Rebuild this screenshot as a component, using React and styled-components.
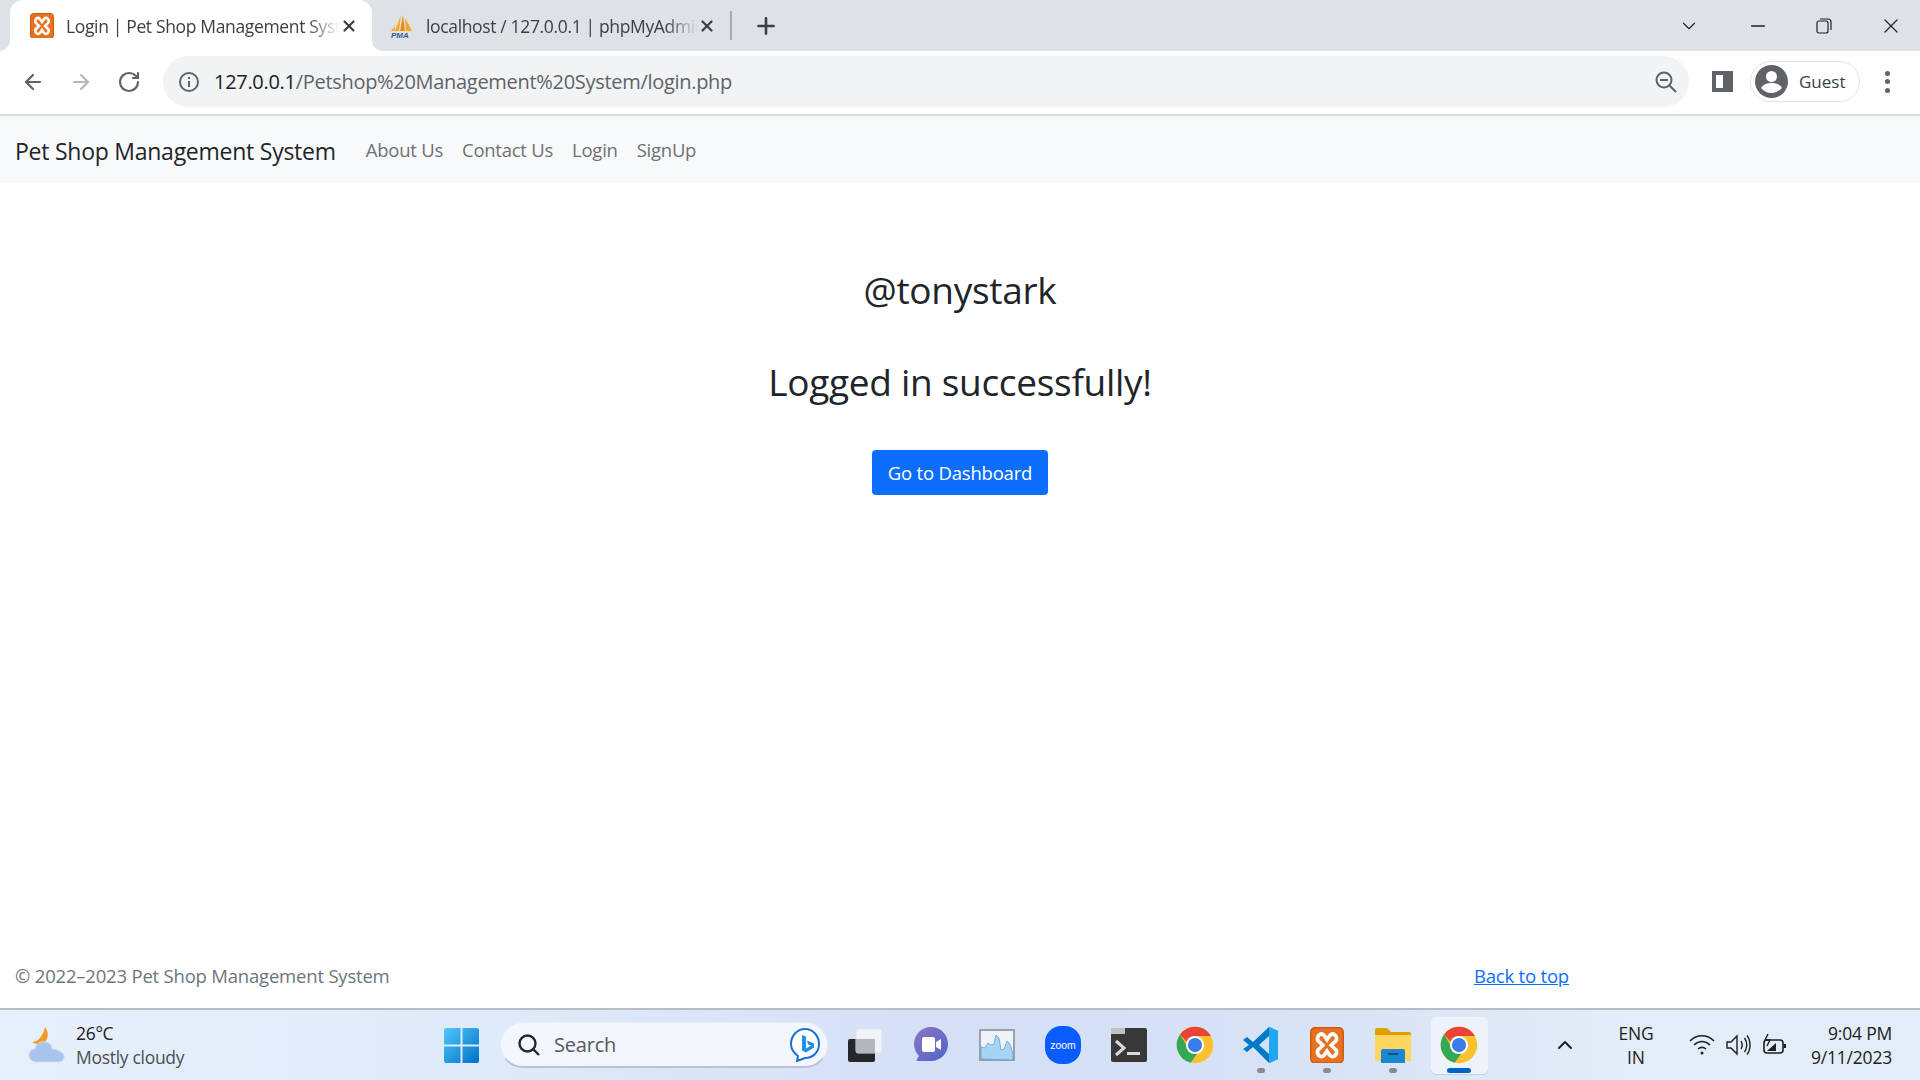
import React from 'react';
import styled, { createGlobalStyle } from 'styled-components';
import { ArrowLeft, ArrowRight, RotateCw, X, Plus, ChevronDown, Minus, ChevronUp } from 'lucide-react';

const GlobalStyle = createGlobalStyle`
  html, body { margin: 0; padding: 0; height: 100%; background: #fff; }
  body { font-family: "Open Sans", "Liberation Sans", sans-serif; color: #212529; }
  #root { height: 100%; }
  * { box-sizing: border-box; }
`;

const Page = styled.div`
  display: flex;
  flex-direction: column;
  width: 1920px;
  height: 1080px;
  overflow: hidden;
`;

/* browser chrome */
const TabStrip = styled.div`
  display: flex;
  align-items: stretch;
  height: 51px;
  padding-left: 10px;
  background: #dee1e6;
`;

const ActiveTab = styled.div`
  position: relative;
  display: flex;
  align-items: center;
  width: 362px;
  padding: 0 14px 0 20px;
  background: #fff;
  border-radius: 13px 13px 0 0;
  &::before, &::after {
    content: "";
    position: absolute;
    bottom: 0;
    width: 10px;
    height: 10px;
    background: radial-gradient(circle at var(--c) 0, #dee1e6 9.5px, #fff 10px);
  }
  &::before { left: -10px; --c: 0; }
  &::after { right: -10px; --c: 100%; }
`;

const Tab = styled.div`
  display: flex;
  align-items: center;
  width: 358px;
  padding: 0 14px 0 18px;
`;

const TabTitle = styled.span`
  flex: 1;
  margin-left: ${p => p.$gap}px;
  overflow: hidden;
  white-space: nowrap;
  font-size: 17.5px;
  letter-spacing: -0.35px;
  color: #3c4043;
  -webkit-mask-image: linear-gradient(to right, #000 88%, transparent 100%);
  mask-image: linear-gradient(to right, #000 88%, transparent 100%);
`;

const TabSeparator = styled.div`
  align-self: center;
  width: 2px;
  height: 29px;
  background: #a6a9ae;
`;

const NewTab = styled.div`
  display: flex;
  align-items: center;
  margin-left: 21px;
  color: #3c4043;
`;

const WindowControls = styled.div`
  display: flex;
  align-items: center;
  margin-left: auto;
  padding-right: 17px;
  color: #202124;
  gap: 47px;
`;

const Toolbar = styled.div`
  display: flex;
  align-items: center;
  height: 65px;
  padding: 0 0 2px 21px;
  background: #fff;
  border-bottom: 2px solid #dadce0;
`;

const NavIcons = styled.div`
  display: flex;
  align-items: center;
  gap: 24px;
  width: 142px;
  color: #5f6368;
`;

const Omnibox = styled.div`
  display: flex;
  align-items: center;
  width: 1526px;
  height: 51px;
  padding: 0 12px 0 16px;
  background: #f1f3f4;
  border-radius: 26px;
`;

const Url = styled.span`
  margin-left: 15px;
  font-size: 20px;
  letter-spacing: -0.3px;
  color: #5f6368;
  b { font-weight: 400; color: #202124; }
`;

const ZoomIcon = styled.span`
  display: flex;
  margin-left: auto;
`;

const SidePanel = styled.div`
  width: 21px;
  height: 21px;
  margin-left: 23px;
  border: 4px solid #5f6368;
  border-right-width: 10px;
`;

const GuestPill = styled.div`
  display: flex;
  align-items: center;
  gap: 11px;
  width: 110px;
  height: 41px;
  margin-left: 17px;
  padding-left: 4px;
  border: 1.5px solid #e3e4e6;
  border-radius: 21px;
  font-size: 17px;
  color: #3c4043;
`;

const MenuDots = styled.div`
  display: flex;
  flex-direction: column;
  gap: 3.5px;
  margin-left: 25px;
  i { width: 5px; height: 5px; border-radius: 50%; background: #5f6368; }
`;

/* page */
const Navbar = styled.nav`
  display: flex;
  align-items: center;
  height: 67px;
  padding: 0 15px;
  background: #f8f9fa;
`;

const Brand = styled.a`
  font-size: 23px;
  letter-spacing: -0.25px;
  color: #212529;
  margin-right: 30px;
  padding-top: 2px;
`;

const NavLink = styled.a`
  font-size: 18.5px;
  letter-spacing: -0.25px;
  margin-right: 19px;
  color: #6e7175;
`;

const Main = styled.main`
  flex: 1;
  display: flex;
  flex-direction: column;
  align-items: center;
  padding-top: 83px;
`;

const Heading = styled.h2`
  margin: 0 0 44px;
  font-size: 37px;
  line-height: 48px;
  font-weight: 500;
  letter-spacing: -0.3px;
  color: #212529;
`;

const PrimaryButton = styled.button`
  width: 176px;
  height: 45px;
  margin-top: 0;
  padding: 0;
  border: 0;
  border-radius: 4px;
  background: #0d6efd;
  color: #fff;
  font: 400 18.5px "Open Sans", sans-serif;
  letter-spacing: -0.2px;
`;

const Footer = styled.footer`
  display: flex;
  justify-content: space-between;
  align-items: center;
  height: 32px;
  margin-bottom: 17px;
  padding: 0 351px 0 15px;
  font-size: 18.5px;
  letter-spacing: -0.2px;
  color: #6c757d;
  a { color: #0d6efd; text-decoration: underline; }
`;

/* taskbar */
const Taskbar = styled.div`
  display: flex;
  align-items: center;
  height: 72px;
  padding-left: 28px;
  border-top: 2px solid #b9bcc2;
  background: linear-gradient(90deg, #e6f0fa 0%, #dfeafa 25%, #d5dff5 50%, #d8e3f6 70%, #e3edf8 85%, #e3edf8 100%);
`;

const Weather = styled.div`
  display: flex;
  align-items: center;
  gap: 11px;
  width: 416px;
`;

const WeatherText = styled.div`
  font-size: 17.5px;
  line-height: 24px;
  letter-spacing: -0.3px;
  color: #1f2023;
  span { display: block; color: #4b4e55; }
`;

const StartSlot = styled.div`
  display: flex;
  width: 35px;
`;

const SearchBox = styled.div`
  display: flex;
  align-items: center;
  width: 328px;
  height: 46px;
  margin-left: 21px;
  padding: 0 7px 0 16px;
  background: #f3f6fd;
  border-radius: 23px;
  border: 1px solid #e6ebf6;
  border-bottom: 2px solid #b9c0d2;
  font-size: 20px;
  color: #55585f;
  span { margin-left: 13px; flex: 1; letter-spacing: -0.2px; }
`;

const AppRow = styled.div`
  display: flex;
  margin-left: 4px;
`;

const AppSlot = styled.div`
  position: relative;
  display: flex;
  align-items: center;
  justify-content: center;
  width: 66px;
  height: 57px;
  &::before {
    content: "";
    display: ${p => (p.$active ? 'block' : 'none')};
    position: absolute;
    inset: 0 4.5px;
    border-radius: 5px;
    background: #eef2fb;
    box-shadow: 0 1px 0 #c6cddd;
  }
  svg { position: relative; }
`;

const RunDot = styled.i`
  position: absolute;
  bottom: 1px;
  left: 50%;
  height: 5px;
  border-radius: 3px;
  width: ${p => (p.$active ? 24 : 8)}px;
  margin-left: ${p => (p.$active ? -12 : -4)}px;
  background: ${p => (p.$active ? '#0067c0' : '#858a94')};
`;

const Tray = styled.div`
  display: flex;
  align-items: center;
  margin-left: auto;
  padding-right: 28px;
  color: #1f2023;
`;

const LangBlock = styled.div`
  margin-left: 34px;
  width: 50px;
  text-align: center;
  font-size: 17.5px;
  line-height: 24px;
  letter-spacing: -0.2px;
`;

const TrayIcons = styled.div`
  display: flex;
  align-items: center;
  gap: 11px;
  margin-left: 28px;
`;

const Clock = styled.div`
  margin-left: 24px;
  text-align: right;
  font-size: 17.5px;
  line-height: 24px;
  letter-spacing: -0.2px;
`;

const XamppIcon = ({ size = 24 }) => (
  <svg width={size} height={size * 1.08} viewBox="0 0 24 26">
    <rect x="0.5" y="0.5" width="23" height="25" rx="3" fill="#e8711f" stroke="#c9590f" />
    <path d="M6 6 q2-2 4 0 l2 3 2-3 q2-2 4 0 q2 3-1 5 l-2 2 2 2 q3 2 1 5 q-2 2-4 0 l-2-3-2 3 q-2 2-4 0 q-2-3 1-5 l2-2-2-2 q-3-2-1-5z" fill="none" stroke="#fff" strokeWidth="2.6" />
  </svg>
);

const PmaIcon = () => (
  <svg width="24" height="24" viewBox="0 0 24 24">
    <path d="M11 1 L5 17 H9z" fill="#f6a81c" />
    <path d="M13 1 L10 17 H15z" fill="#ee8a12" />
    <path d="M15 4 L16 17 H22z" fill="#f6a81c" />
    <path d="M5 12 L1 17 H5z" fill="#f0b040" />
    <text x="1" y="24" fontSize="8" fontWeight="700" fontStyle="italic" fill="#3b5a8c" fontFamily="Liberation Sans">PMA</text>
  </svg>
);

const ChromeIcon = () => (
  <svg width="38" height="38" viewBox="0 0 48 48">
    <circle cx="24" cy="24" r="23" fill="#fbc02d" />
    <path d="M24 1a23 23 0 0 1 20 11.5H24a11.5 11.5 0 0 0-10.8 7.5L5.2 10.5A23 23 0 0 1 24 1z" fill="#ea4335" />
    <path d="M5.2 10.5 14 26a11.5 11.5 0 0 0 12.5 9.2L18.6 46.4A23 23 0 0 1 5.2 10.5z" fill="#34a853" />
    <circle cx="24" cy="24" r="11.5" fill="#fff" />
    <circle cx="24" cy="24" r="9" fill="#3b7de8" />
  </svg>
);

const TaskViewIcon = () => (
  <svg width="36" height="36" viewBox="0 0 36 36">
    <rect x="1" y="12" width="27" height="23" rx="2" fill="#26272a" />
    <rect x="9" y="2" width="26" height="24" rx="2" fill="#f4f5f8" fillOpacity="0.9" stroke="#dfe2ea" />
    <rect x="9" y="12" width="19" height="14" fill="#b5b7bb" />
  </svg>
);

const MeetIcon = () => (
  <svg width="36" height="38" viewBox="0 0 36 38">
    <defs>
      <linearGradient id="meet" x1="0" y1="0" x2="1" y2="1">
        <stop offset="0" stopColor="#8a75c4" />
        <stop offset="1" stopColor="#5163c8" />
      </linearGradient>
    </defs>
    <path d="M18 1c10 0 17 8 17 17s-7 17-17 17H5c-1.500 0-2-1-1-2l2-3C3 27 1 23 1 18 1 9 8 1 18 1z" fill="url(#meet)" />
    <rect x="9" y="11" width="13" height="15" rx="2" fill="#fff" />
    <path d="M23 16l5-3v11l-5-3z" fill="#fff" />
  </svg>
);

const MonitorIcon = () => (
  <svg width="36" height="36" viewBox="0 0 36 36">
    <rect x="1" y="3" width="34" height="30" fill="#eef3f9" stroke="#9aa1ab" strokeWidth="2" />
    <path d="M2 32V20l4 1 3-5 3 2 3-1 2-9 3 3 2 12 3-1 3-8 3 3 3 10v6z" fill="#a6d4f2" stroke="#5ba6d6" strokeWidth="0.8" />
  </svg>
);

const ZoomAppIcon = () => (
  <svg width="36" height="38" viewBox="0 0 36 38">
    <rect x="0" y="0" width="36" height="38" rx="16" fill="#0b5cff" />
    <text x="18" y="23" fontSize="10.500" fill="#fff" textAnchor="middle" fontFamily="Liberation Sans">zoom</text>
  </svg>
);

const TerminalIcon = () => (
  <svg width="36" height="34" viewBox="0 0 36 34">
    <rect x="0" y="0" width="36" height="34" rx="2" fill="#383838" />
    <rect x="0" y="0" width="14" height="6" fill="#c0c0c0" />
    <path d="M5 13l8 7-8 7" fill="none" stroke="#d9d9d9" strokeWidth="3" />
    <rect x="16" y="24" width="13" height="3" fill="#d9d9d9" />
  </svg>
);

const VsCodeIcon = () => (
  <svg width="36" height="38" viewBox="0 0 36 38">
    <path d="M26 1l9 4v28l-9 4L10 21l-6 5-4-3 6-4-6-5 4-3 6 5z" fill="#0078c8" />
    <path d="M26 1l9 4v28l-9 4z" fill="#1fa8f1" />
    <path d="M26 10v18l-10-9z" fill="#d5dff5" />
  </svg>
);

const FolderIcon = () => (
  <svg width="36" height="36" viewBox="0 0 36 36">
    <path d="M0 3a2 2 0 0 1 2-2h10l4 4h18a2 2 0 0 1 2 2v4H0z" fill="#e0a100" />
    <path d="M0 8h36v26H0z" fill="#ffd662" />
    <path d="M6 36V24a2 2 0 0 1 2-2h20a2 2 0 0 1 2 2v12z" fill="#1b87d2" />
    <rect x="13" y="26" width="10" height="2" fill="#0c4f8f" />
  </svg>
);

const WinLogo = () => (
  <svg width="35" height="35" viewBox="0 0 35 35">
    <defs>
      <linearGradient id="win" x1="0" y1="0" x2="1" y2="1">
        <stop offset="0" stopColor="#4fc8fa" />
        <stop offset="1" stopColor="#0070c8" />
      </linearGradient>
    </defs>
    <path d="M0 2a2 2 0 0 1 2-2h14.500v16.500H0zM18.500 0H33a2 2 0 0 1 2 2v14.500H18.500zM0 18.500h16.500V35H2a2 2 0 0 1-2-2zM18.500 18.500H35V33a2 2 0 0 1-2 2H18.500z" fill="url(#win)" />
  </svg>
);

const WeatherIcon = () => (
  <svg width="37" height="36" viewBox="0 0 37 36">
    <path d="M17 0c4 5 4 12-2 17-3 1-8 0-11-2 6 0 11-6 13-15z" fill="#f59a23" />
    <path d="M9 35c-5 0-8-3-8-7 0-3 2-6 6-6 1-5 5-8 10-7 4 0 7 3 7 7 1 0 9 1 12 6 1 4-2 7-6 7z" fill="#a9c4ec" stroke="#cfdcf3" />
  </svg>
);

const BingIcon = () => (
  <svg width="30" height="34" viewBox="0 0 30 34">
    <path d="M15 1c8 0 14 7 14 15s-6 14-14 14l-8 3 1-5C4 25 1 21 1 16 1 8 7 1 15 1z" fill="#fff" stroke="#1a6fd8" strokeWidth="2" />
    <path d="M12 7l4 1.500v12l5-3-3-1-1-4 7 3v4l-8 5-4-2z" fill="#1f8fe8" />
  </svg>
);

const apps = [
  { id: 'view', el: <TaskViewIcon /> },
  { id: 'meet', el: <MeetIcon /> },
  { id: 'monitor', el: <MonitorIcon /> },
  { id: 'zoom', el: <ZoomAppIcon /> },
  { id: 'term', el: <TerminalIcon /> },
  { id: 'chrome', el: <ChromeIcon /> },
  { id: 'code', el: <VsCodeIcon />, running: true },
  { id: 'xampp', el: <XamppIcon size={34} />, running: true },
  { id: 'folder', el: <FolderIcon />, running: true },
  { id: 'chrome2', el: <ChromeIcon />, active: true },
];

export default function App() {
  return (
    <Page>
      <GlobalStyle />
      <TabStrip>
        <ActiveTab>
          <XamppIcon />
          <TabTitle $gap={12}>Login | Pet Shop Management System</TabTitle>
          <X size={18} strokeWidth={3} color="#3c4043" />
        </ActiveTab>
        <Tab>
          <PmaIcon />
          <TabTitle $gap={12}>localhost / 127.0.0.1 | phpMyAdmin</TabTitle>
          <X size={18} strokeWidth={3} color="#3c4043" />
        </Tab>
        <TabSeparator />
        <NewTab><Plus size={26} strokeWidth={2.4} /></NewTab>
        <WindowControls>
          <ChevronDown size={22} strokeWidth={1.2} />
          <Minus size={22} strokeWidth={1.4} />
          <svg width="16" height="16" viewBox="0 0 16 16" fill="none" stroke="#202124" strokeWidth="1.2">
            <rect x="1" y="3" width="11" height="12" rx="2" />
            <path d="M4 1h8a3 3 0 0 1 3 3v8" />
          </svg>
          <X size={24} strokeWidth={1.2} />
        </WindowControls>
      </TabStrip>
      <Toolbar>
        <NavIcons>
          <ArrowLeft size={24} strokeWidth={2.2} />
          <ArrowRight size={24} strokeWidth={2.2} color="#b4b6ba" />
          <RotateCw size={24} strokeWidth={2.2} />
        </NavIcons>
        <Omnibox>
          <svg width="20" height="20" viewBox="0 0 20 20" fill="none" stroke="#5f6368" strokeWidth="2">
            <circle cx="10" cy="10" r="9" />
            <path d="M10 9v6M10 5v2" />
          </svg>
          <Url><b>127.0.0.1</b>/Petshop%20Management%20System/login.php</Url>
          <ZoomIcon>
            <svg width="22" height="22" viewBox="0 0 22 22" fill="none" stroke="#5f6368" strokeWidth="2">
              <circle cx="9" cy="9" r="7.500" />
              <path d="M5 9h8M14.500 14.500L21 21" />
            </svg>
          </ZoomIcon>
        </Omnibox>
        <SidePanel />
        <GuestPill>
          <svg width="33" height="33" viewBox="0 0 33 33">
            <circle cx="16.500" cy="16.500" r="16.500" fill="#5f6368" />
            <circle cx="16.500" cy="11.500" r="5.500" fill="#fff" />
            <path d="M6 23c2-4 7-5 10.500-5S25 19 27 23c-3 3-6 5-10.500 5S9 26 6 23z" fill="#fff" />
          </svg>
          Guest
        </GuestPill>
        <MenuDots><i /><i /><i /></MenuDots>
      </Toolbar>
      <Navbar>
        <Brand>Pet Shop Management System</Brand>
        <NavLink>About Us</NavLink>
        <NavLink>Contact Us</NavLink>
        <NavLink>Login</NavLink>
        <NavLink>SignUp</NavLink>
      </Navbar>
      <Main>
        <Heading>@tonystark</Heading>
        <Heading>Logged in successfully!</Heading>
        <PrimaryButton>Go to Dashboard</PrimaryButton>
      </Main>
      <Footer>
        <span>© 2022–2023 Pet Shop Management System</span>
        <a href="#top">Back to top</a>
      </Footer>
      <Taskbar>
        <Weather>
          <WeatherIcon />
          <WeatherText>26°C<span>Mostly cloudy</span></WeatherText>
        </Weather>
        <StartSlot><WinLogo /></StartSlot>
        <SearchBox>
          <svg width="24" height="24" viewBox="0 0 24 24" fill="none" stroke="#26272a" strokeWidth="2.400">
            <circle cx="10.500" cy="10.500" r="8" />
            <path d="M16.500 16.500L22 22" />
          </svg>
          <span>Search</span>
          <BingIcon />
        </SearchBox>
        <AppRow>
          {apps.map(a => (
            <AppSlot key={a.id} $active={a.active}>
              {a.el}
              {(a.running || a.active) && <RunDot $active={a.active} />}
            </AppSlot>
          ))}
        </AppRow>
        <Tray>
          <ChevronUp size={24} strokeWidth={2} />
          <LangBlock>ENG<br />IN</LangBlock>
          <TrayIcons>
            <svg width="26" height="22" viewBox="0 0 26 22" fill="none" stroke="#1f2023" strokeWidth="1.600">
              <path d="M1 7c7-7 17-7 24 0M5 11c5-4.500 11-4.500 16 0M9 15c2.500-2 5.500-2 8 0" />
              <circle cx="13" cy="19" r="1.500" fill="#1f2023" stroke="none" />
            </svg>
            <svg width="25" height="24" viewBox="0 0 25 24" fill="none" stroke="#1f2023" strokeWidth="1.400">
              <path d="M1 9h4l6-6v18l-6-6H1z" />
              <path d="M15 8c1.500 2.500 1.500 5.500 0 8M18.500 5c3 4 3 10 0 14M21 2.500c4 5 4 14 0 19" />
            </svg>
            <svg width="25" height="24" viewBox="0 0 25 24" fill="none" stroke="#1f2023" strokeWidth="1.600">
              <rect x="2" y="7" width="19" height="13" rx="3" />
              <path d="M5 18h9v-8z" fill="#1f2023" stroke="none" />
              <path d="M6 1L3 7h5l-3 6" strokeWidth="1.400" />
              <rect x="21.500" y="11" width="2.500" height="4" fill="#1f2023" stroke="none" />
            </svg>
          </TrayIcons>
          <Clock>9:04 PM<br />9/11/2023</Clock>
        </Tray>
      </Taskbar>
    </Page>
  );
}
